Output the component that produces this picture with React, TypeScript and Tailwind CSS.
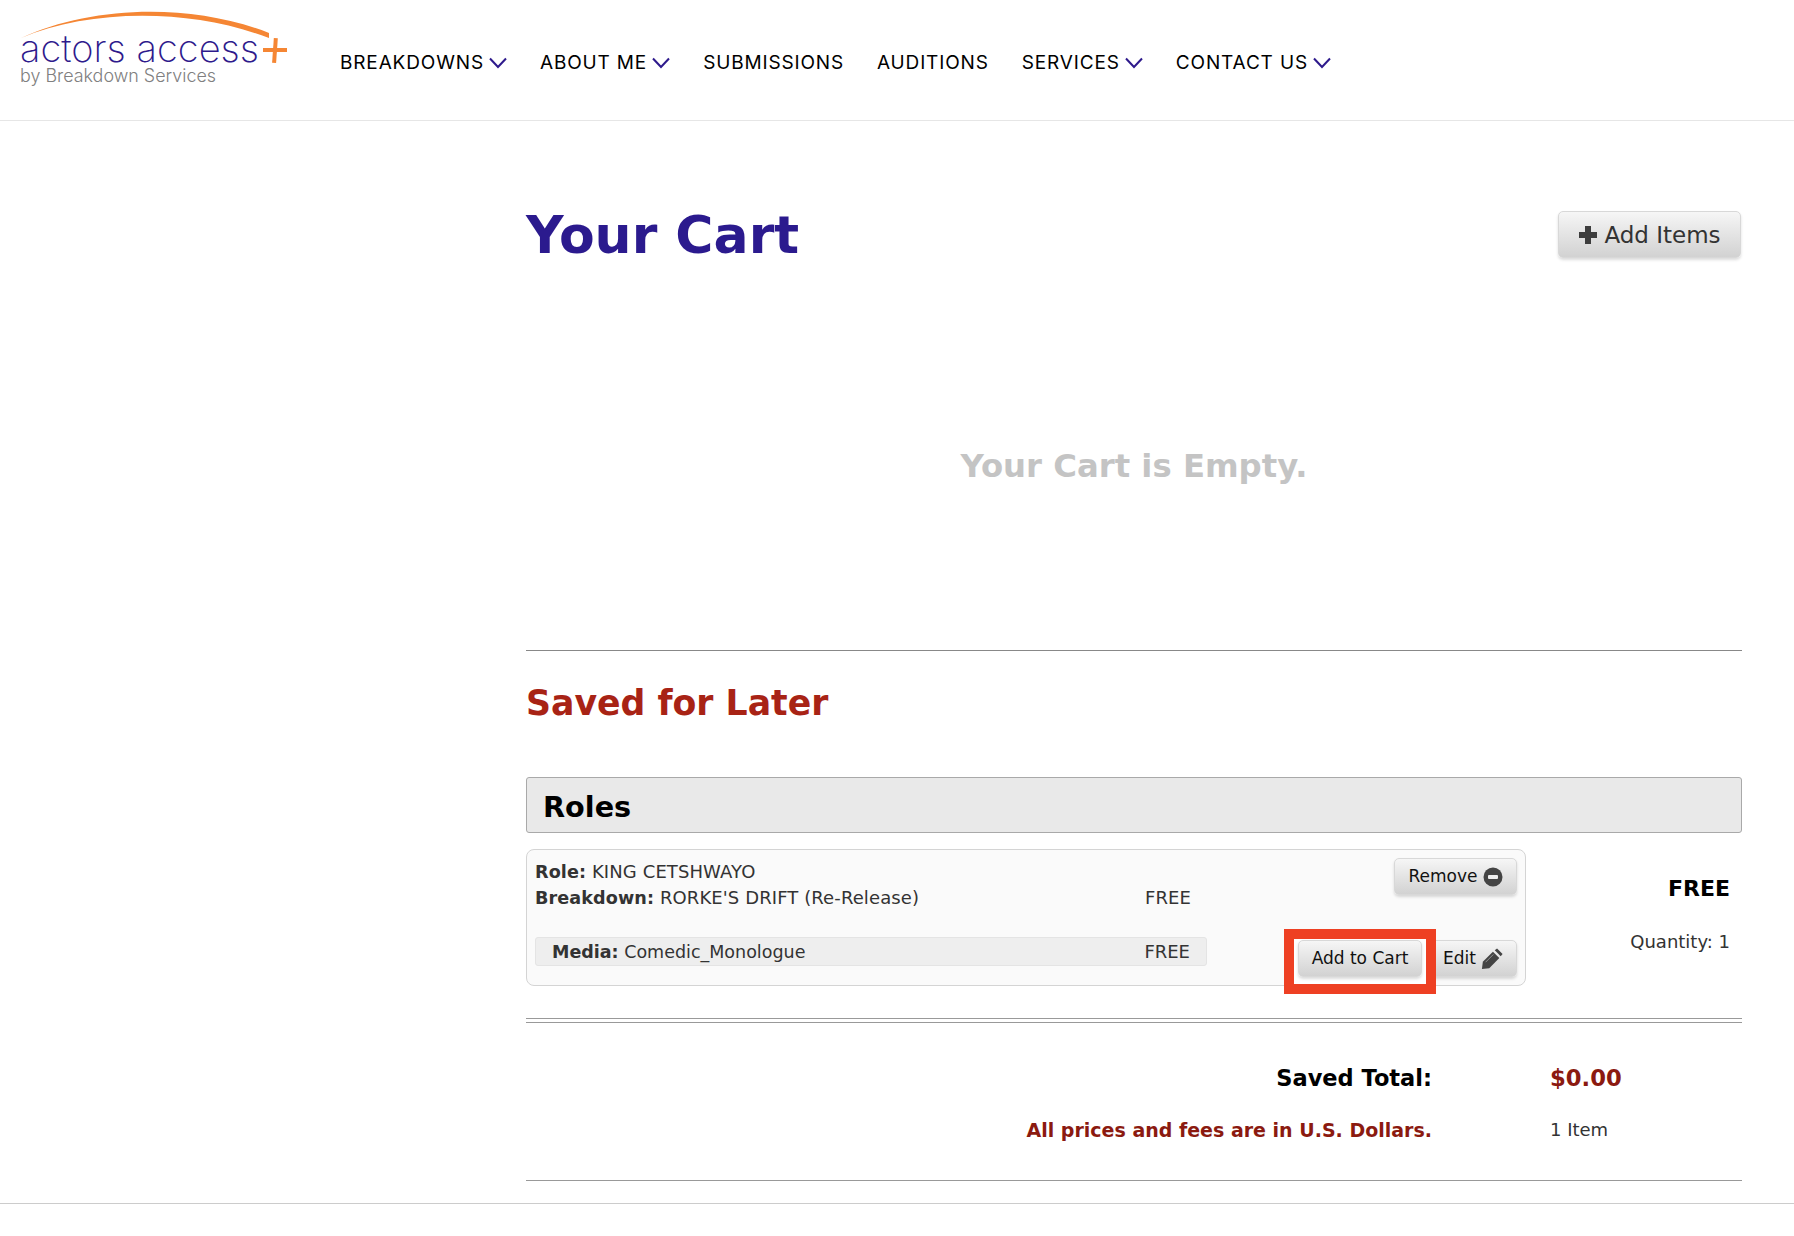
const NAV = [
  { label: "BREAKDOWNS", caret: true },
  { label: "ABOUT ME", caret: true },
  { label: "SUBMISSIONS", caret: false },
  { label: "AUDITIONS", caret: false },
  { label: "SERVICES", caret: true },
  { label: "CONTACT US", caret: true },
];

const BTN =
  "flex items-center rounded-[5px] border border-[#d8d8d8] bg-gradient-to-b from-[#f6f6f6] to-[#d2d2d2] shadow-[0_2px_3px_rgba(0,0,0,0.14)] text-[#111]";

function Logo() {
  return (
    <svg width="290" height="90" viewBox="0 0 290 90" className="shrink-0">
      <path d="M21 38 C 90 6, 190 2, 269 33 L 269 38 C 190 8, 90 9, 21 38 Z" fill="#f58634" />
      <text x="20" y="62" fontFamily="Inter, sans-serif" fontWeight="200" fontSize="37" fill="#2e1a8c" textLength="239" lengthAdjust="spacingAndGlyphs">
        actors access
      </text>
      <text x="20" y="82" fontFamily="Inter, sans-serif" fontWeight="300" fontSize="18" fill="#808080" textLength="196" lengthAdjust="spacingAndGlyphs">
        by Breakdown Services
      </text>
      <rect x="263" y="48" width="24" height="4" fill="#f58634" />
      <rect x="273" y="38" width="4" height="25" fill="#f58634" transform="rotate(4 275 50)" />
    </svg>
  );
}

function Caret() {
  return (
    <svg width="18" height="12" viewBox="0 0 18 12" fill="none" className="ml-[5px]">
      <path d="M1 1.5 L9 10 L17 1.5" stroke="#2e1a8c" strokeWidth="2" />
    </svg>
  );
}

function Header() {
  return (
    <header className="flex h-[121px] items-center border-b border-[#e6e6e6]">
      <div className="self-start">
        <Logo />
      </div>
      <nav className="ml-[50px] mt-[6px] flex items-center gap-[33px] font-['Inter',sans-serif] text-[19px] tracking-[0.85px] text-black">
        {NAV.map((item) => (
          <div key={item.label} className="flex items-center">
            <span>{item.label}</span>
            {item.caret && <Caret />}
          </div>
        ))}
      </nav>
    </header>
  );
}

function MinusIcon() {
  return (
    <svg width="20" height="20" viewBox="0 0 20 20" className="ml-[5px]">
      <circle cx="10" cy="10" r="9.5" fill="#444" />
      <rect x="5" y="8" width="10" height="4" rx="1" fill="#eee" />
    </svg>
  );
}

function PencilIcon() {
  return (
    <svg width="22" height="22" viewBox="0 0 24 24" className="ml-[5px]">
      <path d="M1 23 L2 15 L13 4 L20 11 L9 22 Z" fill="#444" />
      <path d="M15 2.5 L17.5 0.5 L23.5 6.5 L21.5 9 Z" fill="#444" />
      <path d="M5 15.5 L13.5 7" stroke="#999" strokeWidth="1" />
    </svg>
  );
}

function PlusIcon() {
  return (
    <svg width="20" height="20" viewBox="0 0 20 20" className="mr-[6px]">
      <path d="M7 1 H13 V7 H19 V13 H13 V19 H7 V13 H1 V7 H7 Z" fill="#3d3d3d" />
    </svg>
  );
}

function RoleCard() {
  return (
    <div className="flex h-[137px] w-[1000px] justify-between rounded-[8px] border border-[#d4d4d4] bg-[#fafafa] p-[8px] text-[18px] text-[#333]">
      <div className="w-[672px] pt-[1px] leading-[26px]">
        <div className="tracking-[0.1px]">
          <b className="text-[17.6px]">Role:</b> KING CETSHWAYO
        </div>
        <div className="flex justify-between pr-[16px] tracking-[0.1px]">
          <span>
            <b className="text-[17.6px]">Breakdown:</b> RORKE'S DRIFT (Re-Release)
          </span>
          <span>FREE</span>
        </div>
        <div className="mt-[26px] flex h-[29px] items-center justify-between rounded-[3px] border border-[#e4e4e4] bg-[#eeeeee] pl-[16px] pr-[16px]">
          <span className="text-[17.5px]">
            <b>Media:</b> Comedic_Monologue
          </span>
          <span>FREE</span>
        </div>
      </div>
      <div className="flex flex-col items-end gap-[45px] text-[17px]">
        <button className={`${BTN} h-[37px] w-[123px] justify-center`}>
          Remove
          <MinusIcon />
        </button>
        <div className="flex gap-[5px]">
          <div className="relative z-10">
            <div className="absolute -left-[14px] -right-[14px] -top-[11px] -bottom-[17px] border-[10px] border-[#ee4023] bg-white" />
            <button className={`${BTN} relative h-[37px] w-[124px] justify-center`}>Add to Cart</button>
          </div>
          <button className={`${BTN} h-[37px] w-[90px] pl-[15px]`}>
            Edit
            <PencilIcon />
          </button>
        </div>
      </div>
    </div>
  );
}

export default function App() {
  return (
    <div className="min-h-[1236px] bg-white font-['DejaVu_Sans',sans-serif] text-[#333]">
      <Header />
      <main className="ml-[526px] w-[1216px]">
        <div className="flex items-start justify-between pt-[90px]">
          <h1 className="mt-px text-[52px] font-bold leading-[47px] text-[#2b1a8e]">Your Cart</h1>
          <button className={`${BTN} mr-px h-[47px] w-[183px] justify-center pt-px text-[23px] text-[#333]`}>
            <PlusIcon />
            Add Items
          </button>
        </div>
        <div className="flex h-[391px] items-center justify-center pt-[24px] text-[32.3px] font-bold text-[#c4c4c4]">
          Your Cart is Empty.
        </div>
        <div className="border-t border-[#888]" />
        <h2 className="mt-[32px] text-[34.7px] font-bold leading-[40px] text-[#a82315]">Saved for Later</h2>
        <div className="mt-[54px] flex h-[56px] items-center rounded-[3px] border border-[#a9a9a9] bg-[#e9e9e9] pl-[16px] pt-[5px] text-[28.7px] font-bold text-black">
          Roles
        </div>
        <div className="mt-[16px] flex">
          <RoleCard />
          <div className="flex-1 pr-[12px] pt-[27px] text-right">
            <div className="text-[22px] font-bold leading-[26px] text-black">FREE</div>
            <div className="mt-[27px] text-[18px] leading-[26px]">Quantity: 1</div>
          </div>
        </div>
        <div className="mt-[32px] h-[5px] border-y border-[#999]" />
        <div className="mt-[40px] flex items-center leading-[30px]">
          <div className="w-[906px] text-right text-[22.5px] font-bold text-black">Saved Total:</div>
          <div className="ml-[118px] text-[22.7px] font-bold text-[#8b1a10]">$0.00</div>
        </div>
        <div className="mt-[25px] flex items-center leading-[24px]">
          <div className="w-[906px] text-right text-[19px] font-bold text-[#8b1a10]">All prices and fees are in U.S. Dollars.</div>
          <div className="ml-[118px] text-[18px]">1 Item</div>
        </div>
        <div className="mt-[38px] border-t border-[#999]" />
      </main>
      <div className="mt-[22px] border-t border-[#ccc]" />
    </div>
  );
}
